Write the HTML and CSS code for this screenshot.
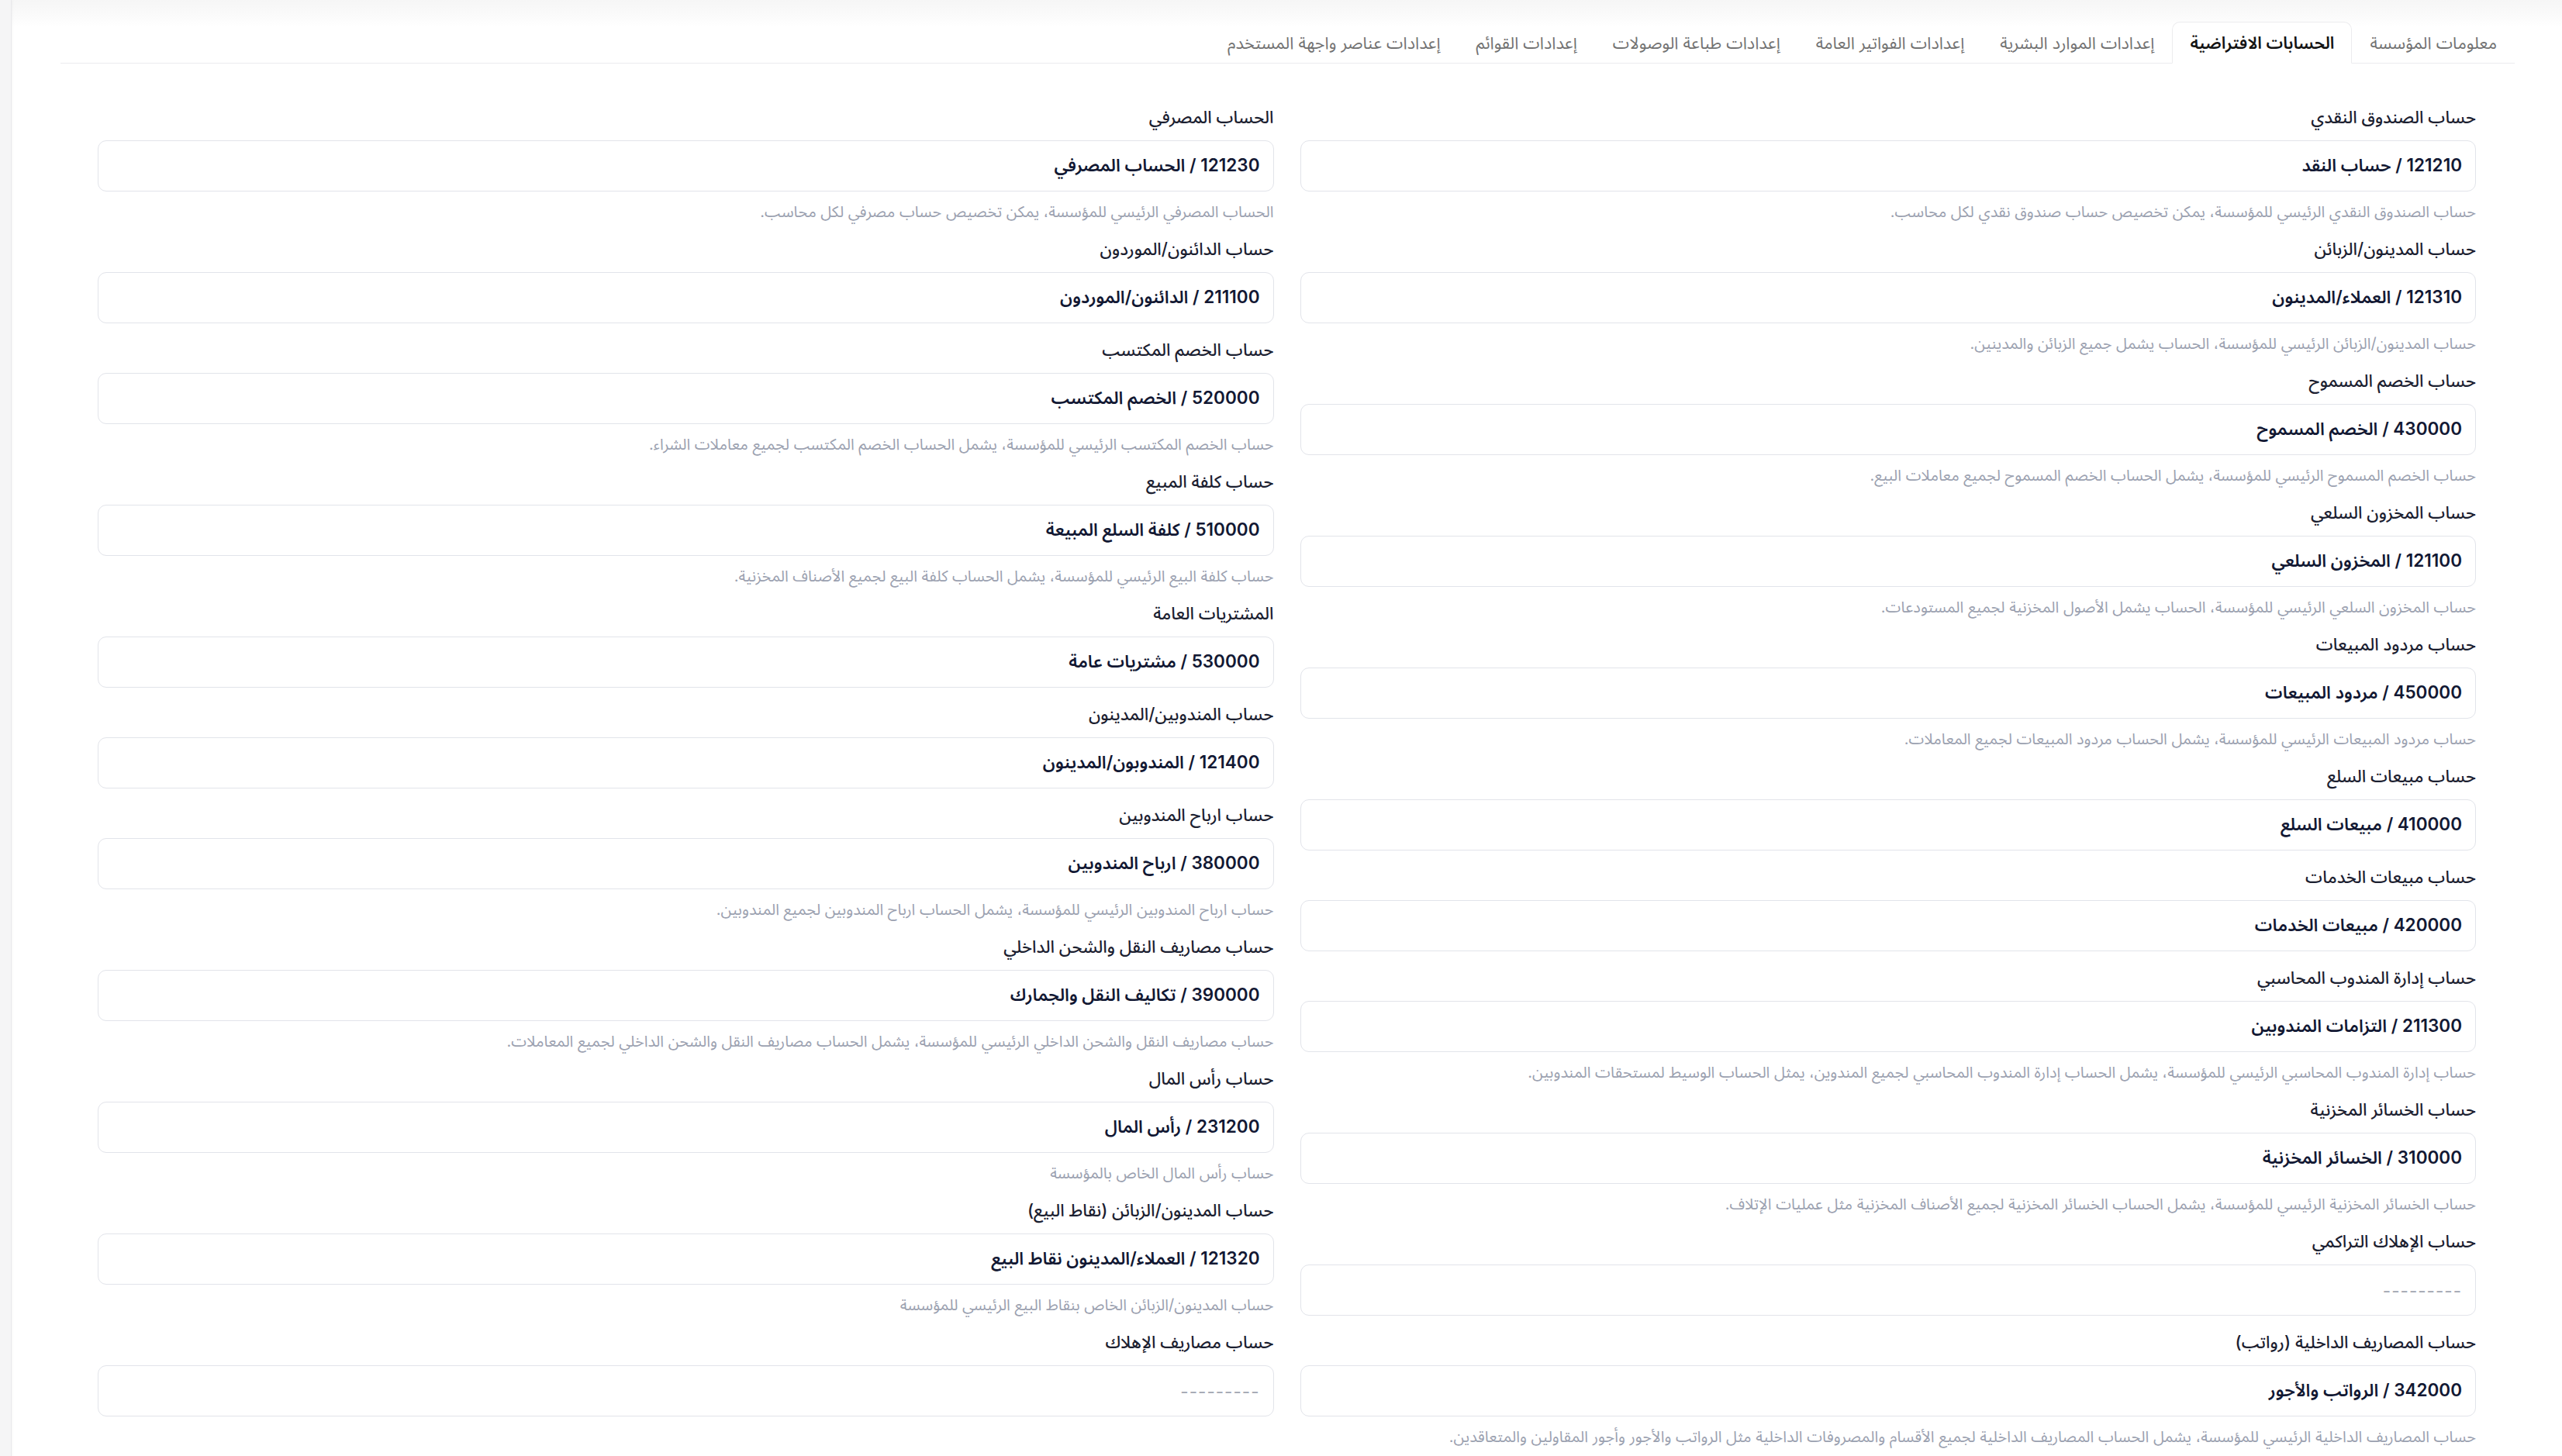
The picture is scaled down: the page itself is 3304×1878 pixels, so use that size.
FILE: index.html
```html
<!DOCTYPE html>
<html lang="ar" dir="rtl">
<head>
<meta charset="utf-8">
<title>الحسابات الافتراضية</title>
<link rel="stylesheet" href="styles.css">
</head>
<body>
<div class="app">
  <main class="panel">
    <ul class="tabs">
      <li class="tab">معلومات المؤسسة</li>
      <li class="tab active">الحسابات الافتراضية</li>
      <li class="tab">إعدادات الموارد البشرية</li>
      <li class="tab">إعدادات الفواتير العامة</li>
      <li class="tab">إعدادات طباعة الوصولات</li>
      <li class="tab">إعدادات القوائم</li>
      <li class="tab">إعدادات عناصر واجهة المستخدم</li>
    </ul>
    <div class="form">
      <div class="col">
        <div class="field">
          <label class="label">حساب الصندوق النقدي</label>
          <input class="input" type="text" readonly value="121210 / حساب النقد">
          <p class="help">حساب الصندوق النقدي الرئيسي للمؤسسة، يمكن تخصيص حساب صندوق نقدي لكل محاسب.</p>
        </div>
        <div class="field">
          <label class="label">حساب المدينون/الزبائن</label>
          <input class="input" type="text" readonly value="121310 / العملاء/المدينون">
          <p class="help">حساب المدينون/الزبائن الرئيسي للمؤسسة، الحساب يشمل جميع الزبائن والمدينين.</p>
        </div>
        <div class="field">
          <label class="label">حساب الخصم المسموح</label>
          <input class="input" type="text" readonly value="430000 / الخصم المسموح">
          <p class="help">حساب الخصم المسموح الرئيسي للمؤسسة، يشمل الحساب الخصم المسموح لجميع معاملات البيع.</p>
        </div>
        <div class="field">
          <label class="label">حساب المخزون السلعي</label>
          <input class="input" type="text" readonly value="121100 / المخزون السلعي">
          <p class="help">حساب المخزون السلعي الرئيسي للمؤسسة، الحساب يشمل الأصول المخزنية لجميع المستودعات.</p>
        </div>
        <div class="field">
          <label class="label">حساب مردود المبيعات</label>
          <input class="input" type="text" readonly value="450000 / مردود المبيعات">
          <p class="help">حساب مردود المبيعات الرئيسي للمؤسسة، يشمل الحساب مردود المبيعات لجميع المعاملات.</p>
        </div>
        <div class="field">
          <label class="label">حساب مبيعات السلع</label>
          <input class="input" type="text" readonly value="410000 / مبيعات السلع">
        </div>
        <div class="field">
          <label class="label">حساب مبيعات الخدمات</label>
          <input class="input" type="text" readonly value="420000 / مبيعات الخدمات">
        </div>
        <div class="field">
          <label class="label">حساب إدارة المندوب المحاسبي</label>
          <input class="input" type="text" readonly value="211300 / التزامات المندوبين">
          <p class="help">حساب إدارة المندوب المحاسبي الرئيسي للمؤسسة، يشمل الحساب إدارة المندوب المحاسبي لجميع المندوين، يمثل الحساب الوسيط لمستحقات المندوبين.</p>
        </div>
        <div class="field">
          <label class="label">حساب الخسائر المخزنية</label>
          <input class="input" type="text" readonly value="310000 / الخسائر المخزنية">
          <p class="help">حساب الخسائر المخزنية الرئيسي للمؤسسة، يشمل الحساب الخسائر المخزنية لجميع الأصناف المخزنية مثل عمليات الإتلاف.</p>
        </div>
        <div class="field">
          <label class="label">حساب الإهلاك التراكمي</label>
          <input class="input" type="text" readonly placeholder="---------">
        </div>
        <div class="field">
          <label class="label">حساب المصاريف الداخلية (رواتب)</label>
          <input class="input" type="text" readonly value="342000 / الرواتب والأجور">
          <p class="help">حساب المصاريف الداخلية الرئيسي للمؤسسة، يشمل الحساب المصاريف الداخلية لجميع الأقسام والمصروفات الداخلية مثل الرواتب والأجور وأجور المقاولين والمتعاقدين.</p>
        </div>
      </div>
      <div class="col">
        <div class="field">
          <label class="label">الحساب المصرفي</label>
          <input class="input" type="text" readonly value="121230 / الحساب المصرفي">
          <p class="help">الحساب المصرفي الرئيسي للمؤسسة، يمكن تخصيص حساب مصرفي لكل محاسب.</p>
        </div>
        <div class="field">
          <label class="label">حساب الدائنون/الموردون</label>
          <input class="input" type="text" readonly value="211100 / الدائنون/الموردون">
        </div>
        <div class="field">
          <label class="label">حساب الخصم المكتسب</label>
          <input class="input" type="text" readonly value="520000 / الخصم المكتسب">
          <p class="help">حساب الخصم المكتسب الرئيسي للمؤسسة، يشمل الحساب الخصم المكتسب لجميع معاملات الشراء.</p>
        </div>
        <div class="field">
          <label class="label">حساب كلفة المبيع</label>
          <input class="input" type="text" readonly value="510000 / كلفة السلع المبيعة">
          <p class="help">حساب كلفة البيع الرئيسي للمؤسسة، يشمل الحساب كلفة البيع لجميع الأصناف المخزنية.</p>
        </div>
        <div class="field">
          <label class="label">المشتريات العامة</label>
          <input class="input" type="text" readonly value="530000 / مشتريات عامة">
        </div>
        <div class="field">
          <label class="label">حساب المندوبين/المدينون</label>
          <input class="input" type="text" readonly value="121400 / المندوبون/المدينون">
        </div>
        <div class="field">
          <label class="label">حساب ارباح المندوبين</label>
          <input class="input" type="text" readonly value="380000 / ارباح المندوبين">
          <p class="help">حساب ارباح المندوبين الرئيسي للمؤسسة، يشمل الحساب ارباح المندوبين لجميع المندوبين.</p>
        </div>
        <div class="field">
          <label class="label">حساب مصاريف النقل والشحن الداخلي</label>
          <input class="input" type="text" readonly value="390000 / تكاليف النقل والجمارك">
          <p class="help">حساب مصاريف النقل والشحن الداخلي الرئيسي للمؤسسة، يشمل الحساب مصاريف النقل والشحن الداخلي لجميع المعاملات.</p>
        </div>
        <div class="field">
          <label class="label">حساب رأس المال</label>
          <input class="input" type="text" readonly value="231200 / رأس المال">
          <p class="help">حساب رأس المال الخاص بالمؤسسة</p>
        </div>
        <div class="field">
          <label class="label">حساب المدينون/الزبائن (نقاط البيع)</label>
          <input class="input" type="text" readonly value="121320 / العملاء/المدينون نقاط البيع">
          <p class="help">حساب المدينون/الزبائن الخاص بنقاط البيع الرئيسي للمؤسسة</p>
        </div>
        <div class="field">
          <label class="label">حساب مصاريف الإهلاك</label>
          <input class="input" type="text" readonly placeholder="---------">
        </div>
      </div>
    </div>
  </main>
  <aside class="rail"></aside>
</div>
</body>
</html>
```

FILE: styles.css
```css
* { box-sizing: border-box; }

html, body {
  margin: 0;
  padding: 0;
  background: #f6f6f7;
}

body {
  font-family: Inter, "Noto Sans Arabic", "Noto Sans", "DejaVu Sans", sans-serif;
  color: #1b2030;
}

.app {
  display: flex;
  min-height: 100vh;
}

.rail {
  width: 15px;
  flex: none;
  background: #f5f5f6;
  border-right: 1px solid #e9e9ec;
  box-shadow: 1px 0 3px rgba(0, 0, 0, 0.04);
}

.panel {
  flex: 1;
  background: linear-gradient(#f6f6f6 0, #fbfbfb 22px, #ffffff 34px);
  padding: 28px 61px 40px 63px;
}

.tabs {
  list-style: none;
  margin: 0;
  padding: 0;
  display: flex;
  border-bottom: 1px solid #ececee;
}

.tab {
  font-size: 21.6px;
  line-height: 28px;
  padding: 12px 22px;
  color: #727272;
  border: 1px solid transparent;
  border-radius: 10px 10px 0 0;
  margin-bottom: -1px;
  white-space: nowrap;
}

.tab.active {
  color: #141414;
  font-weight: 600;
  background: #ffffff;
  border-color: #ececee #ececee #ffffff;
}

.form {
  display: flex;
  gap: 34px;
  padding: 54px 50px 0 48px;
}

.col {
  flex: 1 1 0;
  min-width: 0;
  display: flex;
  flex-direction: column;
}

.field {
  display: flex;
  flex-direction: column;
  margin-bottom: 19px;
}

.label {
  font-size: 22px;
  line-height: 30px;
  font-weight: 500;
  color: #1b2030;
  margin-bottom: 15px;
}

.input {
  height: 66px;
  width: 100%;
  border: 1px solid #e2e4ea;
  border-radius: 11px;
  background: #ffffff;
  padding: 0 17px;
  font-family: inherit;
  font-size: 22.5px;
  font-weight: 600;
  color: #121833;
  outline: none;
  direction: rtl;
}

.input::placeholder {
  color: #a3a7b2;
  font-weight: 400;
  letter-spacing: 1px;
}

.help {
  margin: 12px 0 0;
  font-size: 20px;
  line-height: 28px;
  color: #9ba1b0;
}
```
